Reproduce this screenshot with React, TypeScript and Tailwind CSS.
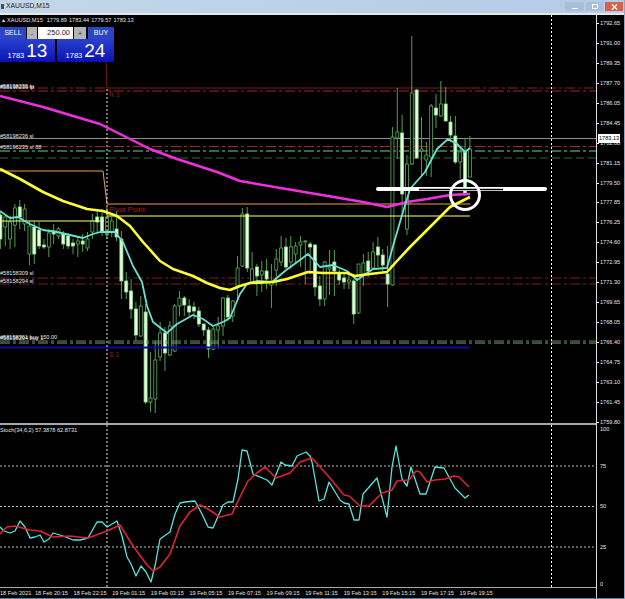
const prices = [
  "1792.65", "1791.00", "1789.35", "1787.70", "1786.05", "1784.45", "1782.80", "1781.15", "1779.50", "1777.85", "1776.25",
  "1774.60", "1772.95", "1771.30", "1769.65", "1768.05", "1766.40", "1764.75", "1763.10", "1761.45", "1759.80",
];

const times = [
  "18 Feb 20:15", "18 Feb 22:15", "19 Feb 01:15", "19 Feb 03:15", "19 Feb 05:15", "19 Feb 07:15",
  "19 Feb 09:15", "19 Feb 11:15", "19 Feb 13:15", "19 Feb 15:15", "19 Feb 17:15", "19 Feb 19:15",
];

// wick top, body top, body bottom, wick bottom, filled
const candles: number[][] = [
  [213, 216, 240, 250, 1], [215, 218, 228, 247, 0], [217, 223, 240, 250, 0], [205, 209, 226, 248, 0], [201, 208, 218, 230, 1],
  [205, 210, 225, 232, 0], [222, 227, 255, 266, 0], [222, 228, 255, 265, 1], [223, 231, 247, 250, 1], [240, 246, 248, 250, 1],
  [230, 234, 248, 258, 0], [225, 232, 235, 245, 1], [228, 230, 237, 240, 0], [232, 235, 245, 250, 1], [234, 237, 247, 250, 1],
  [240, 244, 247, 255, 1], [238, 242, 245, 258, 0], [235, 242, 245, 253, 1], [233, 240, 249, 252, 0], [215, 222, 233, 240, 0],
  [212, 218, 223, 235, 1], [210, 218, 233, 237, 1], [208, 218, 236, 240, 0], [218, 222, 233, 238, 0], [212, 230, 238, 242, 1],
  [232, 240, 282, 300, 1], [273, 282, 293, 300, 1], [280, 292, 310, 320, 1], [303, 310, 336, 342, 1], [297, 307, 337, 338, 0],
  [305, 313, 403, 405, 1], [353, 399, 403, 413, 0], [342, 361, 400, 414, 0], [323, 334, 358, 362, 0], [328, 334, 354, 372, 1],
  [322, 327, 356, 357, 0], [305, 307, 352, 353, 0], [292, 299, 307, 317, 0], [297, 299, 306, 317, 1], [300, 307, 313, 317, 1],
  [303, 308, 312, 320, 1], [308, 312, 325, 328, 1], [325, 325, 331, 337, 1], [328, 331, 350, 359, 1], [328, 330, 350, 351, 0],
  [318, 327, 331, 350, 0], [298, 299, 327, 337, 0], [296, 299, 318, 322, 1], [301, 302, 317, 323, 0], [257, 269, 287, 300, 0],
  [209, 215, 267, 268, 0], [208, 215, 269, 273, 1], [253, 270, 283, 283, 0], [265, 268, 277, 297, 1], [262, 272, 276, 293, 0],
  [260, 272, 280, 290, 1], [265, 282, 286, 309, 0], [250, 260, 271, 287, 0], [237, 249, 263, 267, 0], [239, 248, 268, 270, 1],
  [237, 248, 263, 270, 0], [243, 247, 255, 265, 0], [237, 243, 246, 268, 0], [241, 242, 243, 285, 0], [243, 245, 248, 275, 1],
  [245, 246, 288, 297, 1], [277, 287, 300, 307, 1], [262, 263, 300, 307, 0], [251, 268, 270, 296, 0], [251, 263, 272, 297, 1],
  [270, 275, 281, 286, 1], [275, 279, 283, 290, 1], [275, 281, 283, 290, 0], [280, 282, 315, 325, 1], [265, 265, 314, 315, 0],
  [255, 264, 275, 287, 0], [253, 262, 272, 278, 1], [243, 253, 269, 270, 0], [238, 248, 256, 268, 1], [250, 256, 266, 273, 1],
  [247, 275, 285, 308, 1], [128, 138, 286, 287, 0], [89, 133, 139, 160, 0], [116, 134, 195, 215, 1], [156, 165, 230, 236, 0],
  [37, 94, 165, 166, 0], [90, 91, 159, 160, 1], [118, 150, 152, 178, 0], [143, 156, 161, 177, 0], [105, 107, 158, 178, 0],
  [95, 109, 116, 129, 1], [82, 105, 117, 118, 0], [88, 105, 122, 122, 1], [117, 123, 136, 143, 1], [117, 137, 163, 165, 1],
  [147, 153, 163, 180, 0], [140, 152, 195, 197, 1], [137, 150, 178, 178, 0],
];

const yellowMa = "0,170 20,180 43,193 63,202 87,210 103,212 117,217 130,227 143,243 160,262 173,270 193,277 207,284 220,289 230,291 240,287 250,284 273,283 287,280 308,273 323,274 347,274 355,277 370,275 387,273 397,262 410,248 420,238 428,230 440,218 450,208 470,198";
const cyanMa = "0,212 10,219 18,218 30,225 43,231 57,233 70,236 83,239 93,235 100,233 115,233 123,243 133,267 142,283 147,307 153,323 167,334 177,325 193,316 203,320 213,327 223,323 230,319 240,295 247,285 257,282 272,283 285,272 308,255 320,268 333,266 347,272 357,281 373,270 387,269 393,247 400,223 410,190 425,173 437,150 448,140 457,145 465,153 470,149";
const magentaMa = "0,97 43,108 100,125 150,150 177,160 217,173 240,182 310,194 363,203 387,208 407,203 427,200 450,196 470,195";

const stochCyan = "0,528 4,532 10,534 15,532 20,522 25,528 30,539 35,538 40,536 44,543 49,540 53,534 63,537 73,541 80,541 88,539 97,523 102,523 107,528 117,522 122,537 127,558 131,565 136,577 141,567 146,573 151,583 155,567 160,540 170,533 175,515 180,504 185,503 195,502 202,515 208,528 213,529 223,506 228,503 233,503 238,480 242,451 247,452 253,475 267,481 272,486 281,463 285,466 292,467 297,457 306,453 310,457 312,463 319,502 324,500 329,483 340,501 344,504 349,505 354,521 359,521 363,495 377,479 387,518 392,468 396,447 402,480 407,487 411,468 420,495 426,495 435,468 444,469 455,489 465,499 469,496";
const stochRed = "0,535 7,528 15,527 30,531 40,532 53,538 70,537 88,539 107,532 120,526 133,547 147,566 153,572 160,568 170,555 180,527 190,513 200,506 208,510 220,518 232,515 240,498 248,482 257,474 265,468 276,479 290,474 300,463 312,459 329,478 344,496 349,497 360,507 369,507 382,494 392,491 397,482 409,481 416,472 420,473 427,483 435,481 445,480 454,477 459,478 469,488";

function Candles() {
  return (
    <g>
      {candles.map(([wt, bt, bb, wb, filled], i) => {
        const x = 0.4 + 4.84 * i;
        return (
          <g key={i}>
            <line x1={x} x2={x} y1={wt} y2={wb} stroke="#4f9f4f" strokeWidth="1" />
            <rect
              x={x - 1.5}
              y={bt}
              width="3"
              height={Math.max(bb - bt, 1)}
              fill={filled ? "#e6ffdc" : "#000"}
              stroke={filled ? "#8fdc8f" : "#5aaa5a"}
              strokeWidth="0.8"
            />
          </g>
        );
      })}
    </g>
  );
}

function MainChart() {
  return (
    <svg className="absolute inset-0" width="596" height="408" viewBox="0 16 596 408">
      <line x1="0" x2="596" y1="139.5" y2="139.5" stroke="#8f8f78" />
      <line x1="0" x2="106" y1="89" y2="89" stroke="#8a2020" strokeDasharray="10 3 3 3" />
      <polyline points="106,62 107,89 470,89" fill="none" stroke="#7a1c1c" />
      <line x1="470" x2="596" y1="89" y2="89" stroke="#8a2020" strokeDasharray="10 3 3 3" />
      <line x1="0" x2="596" y1="92" y2="92" stroke="#9a2828" strokeDasharray="10 3 3 3" />
      <line x1="0" x2="596" y1="147.5" y2="147.5" stroke="#9a2828" strokeDasharray="10 3 3 3" />
      <line x1="0" x2="596" y1="152" y2="152" stroke="#3f8f5f" strokeDasharray="10 3 3 3" strokeWidth="1.5" />
      <line x1="0" x2="596" y1="159" y2="159" stroke="#2c6a3c" strokeDasharray="8 4" />
      <line x1="0" x2="596" y1="279" y2="279" stroke="#7a2020" strokeDasharray="10 3 3 3" />
      <line x1="0" x2="596" y1="285" y2="285" stroke="#7a2020" strokeDasharray="10 3 3 3" />
      <Candles />
      <line x1="0" x2="596" y1="342" y2="342" stroke="#5f8f5f" strokeDasharray="10 3 3 3" />
      <line x1="0" x2="596" y1="344" y2="344" stroke="#7f9f7f" strokeDasharray="10 3 3 3" />
      <line x1="0" x2="470" y1="348.5" y2="348.5" stroke="#0a0aa0" strokeWidth="1.8" />
      <polyline points="0,172 103,172 107,205 470,205" fill="none" stroke="#e8a050" strokeWidth="1" />
      <polyline points="0,222 104,222" fill="none" stroke="#ffff80" strokeWidth="1" />
      <line x1="107" x2="470" y1="217" y2="217" stroke="#ffff80" />
      <line x1="107" x2="107" y1="90" y2="424" stroke="#e8e8e8" strokeDasharray="2 2" />
      <line x1="551.5" x2="551.5" y1="16" y2="424" stroke="#ffffff" strokeDasharray="2 2" />
      <polyline points={magentaMa} fill="none" stroke="#f030e0" strokeWidth="2.5" strokeLinejoin="round" />
      <polyline points={cyanMa} fill="none" stroke="#66e2d2" strokeWidth="1.8" strokeLinejoin="round" />
      <polyline points={yellowMa} fill="none" stroke="#ffff33" strokeWidth="2.6" strokeLinejoin="round" />
      <line x1="378" x2="545" y1="190" y2="190" stroke="#ffffff" strokeWidth="4" strokeLinecap="round" />
      <line x1="419" x2="503" y1="190.5" y2="190.5" stroke="#000000" strokeWidth="1.3" />
      <circle cx="465" cy="196" r="14.5" fill="none" stroke="#ffffff" strokeWidth="3" />
    </svg>
  );
}

function StochChart() {
  return (
    <svg className="absolute inset-0" width="596" height="162" viewBox="0 426 596 162">
      <line x1="0" x2="596" y1="467" y2="467" stroke="#bdbdbd" strokeDasharray="2 2" />
      <line x1="0" x2="596" y1="507.5" y2="507.5" stroke="#bdbdbd" strokeDasharray="2 2" />
      <line x1="0" x2="596" y1="548" y2="548" stroke="#bdbdbd" strokeDasharray="2 2" />
      <line x1="107" x2="107" y1="426" y2="588" stroke="#e8e8e8" strokeDasharray="2 2" />
      <line x1="551.5" x2="551.5" y1="426" y2="588" stroke="#ffffff" strokeDasharray="2 2" />
      <polyline points={stochCyan} fill="none" stroke="#55e5dd" strokeWidth="1.3" strokeLinejoin="round" />
      <polyline points={stochRed} fill="none" stroke="#dd2233" strokeWidth="1.6" strokeLinejoin="round" />
    </svg>
  );
}

function TradePanel() {
  return (
    <div className="absolute left-0 top-[12px] w-[114px] text-white">
      <div className="flex h-[12px] items-stretch gap-px">
        <div className="flex w-[26px] items-center justify-center bg-[#2a46c4] text-[7px]">SELL</div>
        <div className="flex w-[10px] items-center justify-center bg-[#b5b5b5] text-[7px] leading-none text-[#333]">-</div>
        <div className="flex w-[35px] items-center justify-end bg-white pr-[3px] text-[7.5px] text-[#222]">250.00</div>
        <div className="flex w-[12px] items-center justify-center bg-[#b5b5b5] text-[7px] leading-none text-[#333]">+</div>
        <div className="ml-px flex flex-1 items-center justify-center bg-[#2a46c4] text-[7px]">BUY</div>
      </div>
      <div className="flex h-[23px] gap-[2px]">
        <div className="flex w-[55px] items-end justify-center gap-[2px] bg-gradient-to-b from-[#2a3fd0] to-[#0c0cb4] pb-[2px]">
          <span className="mb-[1px] text-[7.5px] leading-none">1783</span>
          <span className="text-[19px] leading-[19px]">13</span>
        </div>
        <div className="flex flex-1 items-end justify-center gap-[2px] bg-gradient-to-b from-[#2a3fd0] to-[#0c0cb4] pb-[2px]">
          <span className="mb-[1px] text-[7.5px] leading-none">1783</span>
          <span className="text-[19px] leading-[19px]">24</span>
        </div>
      </div>
    </div>
  );
}

export default function App() {
  return (
    <div className="flex h-[599px] w-[625px] flex-col overflow-hidden border-r border-[#8fa8c4] bg-black font-['Liberation_Sans',Arial,sans-serif] text-[5.6px] text-[#e4e4e4]">
      <div className="flex h-[14px] items-center justify-between bg-gradient-to-r from-[#c4d7ea] to-[#b4cbe4] pl-[1px] pr-[1px]">
        <div className="flex items-center gap-[2px]">
          <div className="h-[5px] w-[3px] bg-[#39506a]" />
          <span className="text-[6.8px] text-[#222]">XAUUSD,M15</span>
        </div>
        <div className="flex gap-[2px]">
          <div className="flex h-[9px] w-[19px] items-end justify-center bg-[#a9bfd8] pb-[2px]">
            <div className="h-px w-[6px] bg-white" />
          </div>
          <div className="flex h-[9px] w-[17px] items-center justify-center bg-[#a9bfd8]">
            <div className="h-[5px] w-[6px] border border-white" />
          </div>
          <div className="flex h-[9px] w-[18px] items-center justify-center bg-[#d9614c]">
            <svg width="7" height="6" viewBox="0 0 7 6">
              <path d="M1 0.5 L6 5.5 M6 0.5 L1 5.5" stroke="#fff" strokeWidth="1.4" />
            </svg>
          </div>
        </div>
      </div>
      <div className="h-[2px] bg-[#e6e6e6]" />

      <div className="flex">
        <div className="w-[596px]">
          <div className="relative h-[408px]">
            <MainChart />
            <div className="absolute left-[2px] top-0 flex h-[10px] gap-[2px] leading-[10px]">
              <span>▴</span>
              <span className="mr-[2px]">XAUUSD,M15</span>
              <span>1779.89</span>
              <span>1783.44</span>
              <span>1779.57</span>
              <span>1783.13</span>
            </div>
            <TradePanel />
            <span className="absolute left-0 top-[69px] leading-none">#58198235 tp</span>
            <span className="absolute left-0 top-[70px] leading-none">#58198236 tp</span>
            <span className="absolute left-0 top-[119px] leading-none">#58198236 sl</span>
            <span className="absolute left-0 top-[130px] leading-none">#58198235 sl 88</span>
            <span className="absolute left-0 top-[256px] leading-none">#58158309 sl</span>
            <span className="absolute left-0 top-[264px] leading-none">#58158294 sl</span>
            <span className="absolute left-0 top-[320px] leading-none">#58158301 buy 150.00</span>
            <span className="absolute left-0 top-[321px] leading-none">#58158294 buy 1</span>
            <span className="absolute left-[109px] top-[76px] text-[7px] leading-none text-[#8b1e1e]">R 1</span>
            <span className="absolute left-[109px] top-[191px] text-[7.5px] leading-none text-[#a02525]">Pivot Point</span>
            <span className="absolute left-[109px] top-[336px] text-[7px] leading-none text-[#8b1e1e]">S 1</span>
          </div>
          <div className="h-[2px] bg-[#a8a8a8]" />
          <div className="relative h-[162px]">
            <StochChart />
            <span className="absolute left-0 top-[2px] leading-[6px]">Stoch(34,6,2) 57.3878 62.8731</span>
          </div>
          <div className="h-px bg-[#a8a8a8]" />
          <div className="flex h-[10px]">
            <div className="w-[34px] shrink-0 whitespace-nowrap leading-[11px]">18 Feb 2021</div>
            {times.map((t) => (
              <div key={t} className="w-[38.6px] shrink-0 whitespace-nowrap pl-[1px] leading-[11px]">
                {t}
              </div>
            ))}
          </div>
        </div>

        <div className="relative flex-1 border-l border-[#d8d8d8]">
          <div className="h-[408px]">
            {prices.map((p) => (
              <div key={p} className="flex h-[19.95px] shrink-0">
                <div className="mt-[8px] h-px w-[2px] bg-white" />
                <span className="ml-[1px] leading-[17px]">{p}</span>
              </div>
            ))}
          </div>
          <div className="absolute left-px top-[119px] bg-white px-[1px] leading-[9px] text-black">1783.13</div>
          <div className="mt-[2px]">
            <div className="flex h-[37px]"><span className="ml-[3px] leading-[9px]">100</span></div>
            <div className="flex h-[40px]"><span className="ml-[3px] leading-[9px]">75</span></div>
            <div className="flex h-[41px]"><span className="ml-[3px] leading-[9px]">50</span></div>
            <div className="flex h-[37px]"><span className="ml-[3px] leading-[9px]">25</span></div>
            <div className="flex h-[7px]"><span className="ml-[3px] leading-[9px]">0</span></div>
          </div>
        </div>
      </div>
      <div className="mt-auto h-[1px] bg-[#5f7f9f]" />
    </div>
  );
}
